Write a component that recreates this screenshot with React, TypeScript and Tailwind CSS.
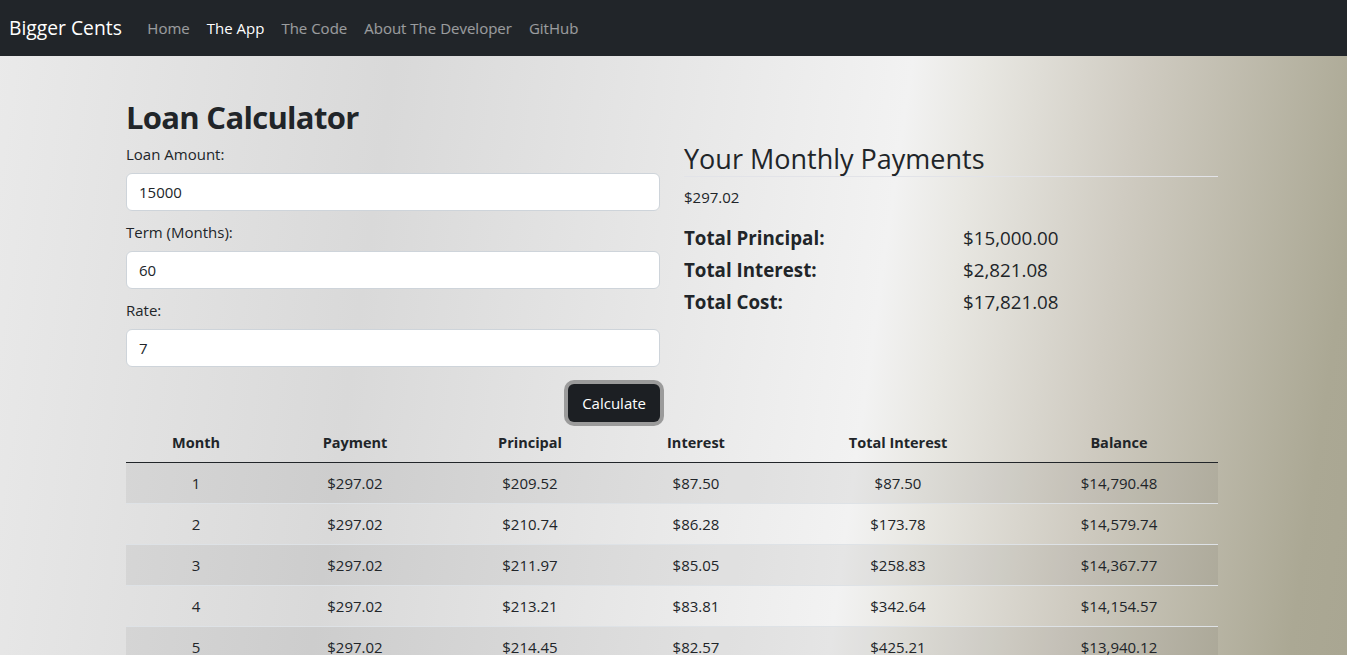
const principal = 15000;
const months = 60;
const rate = 7;

type Row = { month: number; payment: number; principal: number; interest: number; totalInterest: number; balance: number };

function buildSchedule(): Row[] {
  const r = rate / 1200;
  const payment = (principal * r) / (1 - Math.pow(1 + r, -months));
  const rows: Row[] = [];
  let balance = principal;
  let totalInterest = 0;
  for (let m = 1; m <= months; m++) {
    const interest = balance * r;
    const princ = payment - interest;
    totalInterest += interest;
    balance -= princ;
    rows.push({ month: m, payment, principal: princ, interest, totalInterest, balance: Math.abs(balance) });
  }
  return rows;
}

const money = (n: number) =>
  n.toLocaleString("en-US", { style: "currency", currency: "USD", minimumFractionDigits: 2 });

const schedule = buildSchedule();
const monthly = schedule[0].payment;
const totalInterest = schedule[schedule.length - 1].totalInterest;

function Field({ label, value }: { label: string; value: string }) {
  return (
    <div className="mb-[10px]">
      <label className="mb-[8px] block text-[15px] leading-[22px]">{label}</label>
      <input
        readOnly
        value={value}
        className="block h-[38px] w-full rounded-[6px] border border-[#ced4da] bg-white px-3 text-[15px] text-[#212529] outline-none"
      />
    </div>
  );
}

export default function App() {
  const cols = ["w-[140px]", "w-[178px]", "w-[172px]", "w-[160px]", "w-[244px]", "w-[198px]"];
  const heads = ["Month", "Payment", "Principal", "Interest", "Total Interest", "Balance"];

  return (
    <div className="min-h-screen bg-[linear-gradient(98deg,#eaeaea_0%,#d9d9d9_28%,#f2f2f2_64%,#e8e7e2_69%,#cfcbc1_80%,#aba894_96%,#a9a692_100%)] bg-fixed font-['Open_Sans',sans-serif] text-[#212529]">
      <nav className="flex h-14 items-center bg-[#212529] pl-[9px]">
        <span className="mr-[17px] text-[19.3px] text-white">Bigger Cents</span>
        <ul className="flex text-[15px]">
          <li className="px-[8.5px] text-white/55">Home</li>
          <li className="px-[8.5px] text-white">The App</li>
          <li className="px-[8.5px] text-white/55">The Code</li>
          <li className="px-[8.5px] text-white/55">About The Developer</li>
          <li className="px-[8.5px] text-white/55">GitHub</li>
        </ul>
      </nav>

      <main className="ml-[126px] w-[1092px] pt-[40px]">
        <div className="grid grid-cols-2 gap-x-6">
          <section>
            <h1 className="mb-[4px] text-[31px] font-bold leading-[43px] tracking-[-0.7px]">Loan Calculator</h1>
            <Field label="Loan Amount:" value="15000" />
            <Field label="Term (Months):" value="60" />
            <Field label="Rate:" value="7" />
            <div className="mt-[17px] flex justify-end">
              <button className="h-[38px] rounded-[6px] bg-[#1c1f23] px-[14px] text-[15px] text-white ring-4 ring-[#9b9b9b]">
                Calculate
              </button>
            </div>
          </section>

          <section className="pt-[46px]">
            <h3 className="border-b border-[#e2e3e8] text-[27px] leading-[34px]">Your Monthly Payments</h3>
            <p className="mt-[9px] text-[15px] leading-[22px]">{money(monthly)}</p>
            <div className="mt-[14px] grid grid-cols-[279px_1fr] text-[18.75px] leading-[32px]">
              <span className="font-bold">Total Principal:</span>
              <span>{money(principal)}</span>
              <span className="font-bold">Total Interest:</span>
              <span>{money(totalInterest)}</span>
              <span className="font-bold">Total Cost:</span>
              <span>{money(principal + totalInterest)}</span>
            </div>
          </section>
        </div>

        <table className="w-full table-fixed border-collapse text-center text-[15px]">
          <colgroup>
            {cols.map((c) => (
              <col key={c} className={c} />
            ))}
          </colgroup>
          <thead>
            <tr className="border-b border-[#212529]">
              {heads.map((h) => (
                <th key={h} className="px-2 pt-[9px] pb-[7px] text-[14.5px] font-bold leading-6">
                  {h}
                </th>
              ))}
            </tr>
          </thead>
          <tbody>
            {schedule.map((r) => (
              <tr key={r.month} className="border-b border-[#dee2e6] odd:bg-black/5">
                <td className="px-2 py-2 leading-6">{r.month}</td>
                <td className="px-2 py-2 leading-6">{money(r.payment)}</td>
                <td className="px-2 py-2 leading-6">{money(r.principal)}</td>
                <td className="px-2 py-2 leading-6">{money(r.interest)}</td>
                <td className="px-2 py-2 leading-6">{money(r.totalInterest)}</td>
                <td className="px-2 py-2 leading-6">{money(r.balance)}</td>
              </tr>
            ))}
          </tbody>
        </table>
      </main>
    </div>
  );
}
